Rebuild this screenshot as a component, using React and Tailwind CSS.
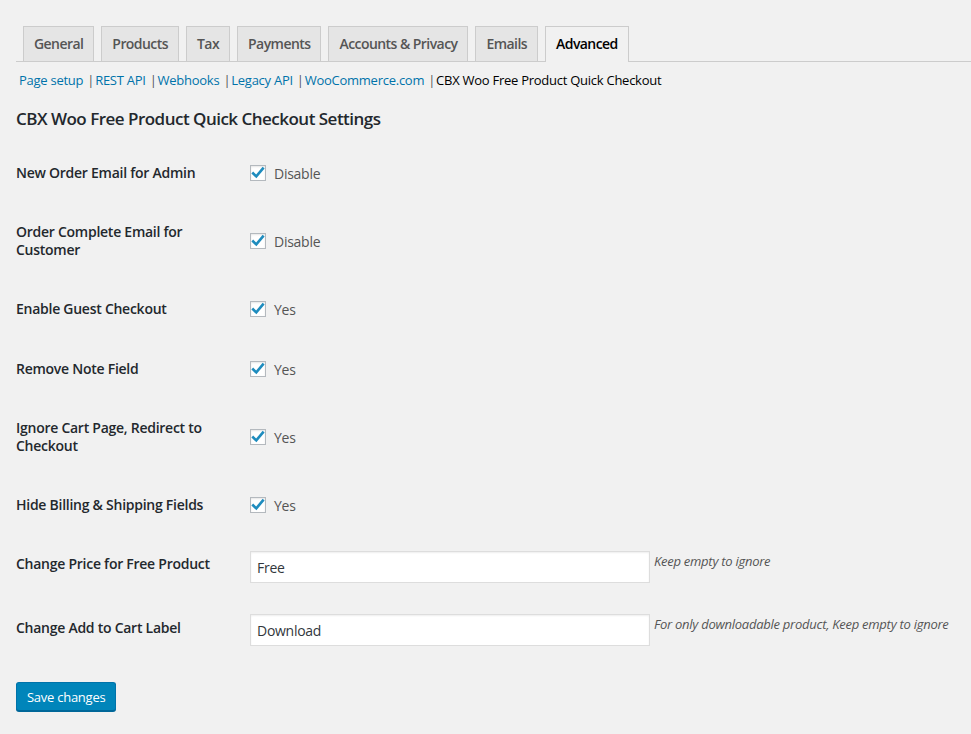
import { useState } from "react"

const tabs = ["General", "Products", "Tax", "Payments", "Accounts & Privacy", "Emails", "Advanced"]

const sections = ["Page setup", "REST API", "Webhooks", "Legacy API", "WooCommerce.com"]

// checkbox settings
const checkRows = [
  { label: "New Order Email for Admin", text: "Disable" },
  { label: "Order Complete Email for\nCustomer", text: "Disable" },
  { label: "Enable Guest Checkout", text: "Yes" },
  { label: "Remove Note Field", text: "Yes" },
  { label: "Ignore Cart Page, Redirect to\nCheckout", text: "Yes" },
  { label: "Hide Billing & Shipping Fields", text: "Yes" },
]

function Checkbox({ checked, onChange }) {
  return (
    <span
      onClick={onChange}
      className="flex h-[16px] w-[16px] shrink-0 cursor-pointer items-center justify-center border border-[#b4b9be] bg-white shadow-[inset_0_1px_2px_rgba(0,0,0,0.1)]"
    >
      {checked && (
        <svg width="14" height="14" viewBox="0 0 14 14">
          <path
            d="M2.2 7.4 L5.3 10.4 L11.8 2.6"
            fill="none"
            stroke="#1e8cbe"
            strokeWidth="2.6"
            strokeLinecap="square"
          />
        </svg>
      )}
    </span>
  )
}

export default function App() {
  const [checks, setChecks] = useState(checkRows.map(() => true))
  const [price, setPrice] = useState("Free")
  const [cartLabel, setCartLabel] = useState("Download")

  const toggle = (i) => {
    setChecks((prev) => prev.map((v, idx) => (idx === i ? !v : v)))
  }

  return (
    <div
      className="min-h-[734px] w-full bg-[#f1f1f1] pl-[16px] text-[13px] text-[#23282d]"
      style={{ fontFamily: '"Open Sans", "Noto Sans", sans-serif' }}
    >
      {/* Tabs */}
      <div className="flex items-end border-b border-[#ccc] pt-[26px]">
        {tabs.map((t) => (
          <div
            key={t}
            className={
              t === "Advanced"
                ? "ml-[7px] -mb-px border border-b-0 border-[#ccc] bg-[#f1f1f1] px-[10px] pb-[6px] pt-[5px] text-[14px] font-semibold leading-[24px] tracking-[-0.04em] text-black"
                : "ml-[7px] border border-b-0 border-[#ccc] bg-[#e5e5e5] px-[10px] py-[5px] text-[14px] font-semibold leading-[24px] tracking-[-0.04em] text-[#555]"
            }
          >
            {t}
          </div>
        ))}
      </div>

      {/* Sub links */}
      <div className="mt-[9px] flex pl-[3px] text-[13px] leading-[18px] tracking-[-0.02em]">
        {sections.map((s) => (
          <span key={s} className="flex">
            <a className="cursor-pointer text-[#0073aa]">{s}</a>
            <span className="ml-[4px] mr-[1px] text-[#555]">|</span>
          </span>
        ))}
        <span className="text-black">CBX Woo Free Product Quick Checkout</span>
      </div>

      <h2 className="mt-[19px] text-[17px] font-semibold leading-[22px] tracking-[-0.03em] text-[#23282d]">
        CBX Woo Free Product Quick Checkout Settings
      </h2>

      {/* Form table */}
      <div className="mt-[13px] tracking-[-0.02em]">
        {checkRows.map((r, i) => (
          <div key={r.label} className="flex items-center py-[20px]">
            <div className="w-[234px] shrink-0 whitespace-pre-line text-[14px] font-semibold leading-[18px]">
              {r.label}
            </div>
            <label className="flex h-[20px] items-center gap-[8px] text-[14px] text-[#555]">
              <Checkbox checked={checks[i]} onChange={() => toggle(i)} />
              <span>{r.text}</span>
            </label>
          </div>
        ))}

        <div className="flex items-start">
          <div className="w-[234px] shrink-0 py-[20px] text-[14px] font-semibold leading-[18px]">
            Change Price for Free Product
          </div>
          <div className="flex items-start pb-[16px] pt-[16px]">
            <input
              type="text"
              value={price}
              onChange={(e) => setPrice(e.target.value)}
              className="h-[32px] w-[400px] border border-[#ddd] bg-white px-[6px] text-[14px] tracking-[-0.02em] text-[#32373c] shadow-[inset_0_1px_2px_rgba(0,0,0,0.07)] outline-none"
            />
            <span className="ml-[4px] mt-[1px] text-[13px] italic leading-[18px] text-[#555]">
              Keep empty to ignore
            </span>
          </div>
        </div>

        <div className="flex items-start">
          <div className="w-[234px] shrink-0 py-[20px] text-[14px] font-semibold leading-[18px]">
            Change Add to Cart Label
          </div>
          <div className="flex items-start pb-[17px] pt-[15px]">
            <input
              type="text"
              value={cartLabel}
              onChange={(e) => setCartLabel(e.target.value)}
              className="h-[32px] w-[400px] border border-[#ddd] bg-white px-[6px] text-[14px] tracking-[-0.02em] text-[#32373c] shadow-[inset_0_1px_2px_rgba(0,0,0,0.07)] outline-none"
            />
            <span className="ml-[4px] mt-[1px] text-[13px] italic leading-[18px] text-[#555]">
              For only downloadable product, Keep empty to ignore
            </span>
          </div>
        </div>
      </div>

      <button
        type="button"
        className="mt-[19px] h-[29px] rounded-[3px] border border-[#0073aa] border-b-[#006799] bg-[#0085ba] px-[10px] text-[13px] leading-[26px] tracking-[-0.02em] text-white shadow-[0_1px_0_#006799]"
      >
        Save changes
      </button>
    </div>
  )
}
